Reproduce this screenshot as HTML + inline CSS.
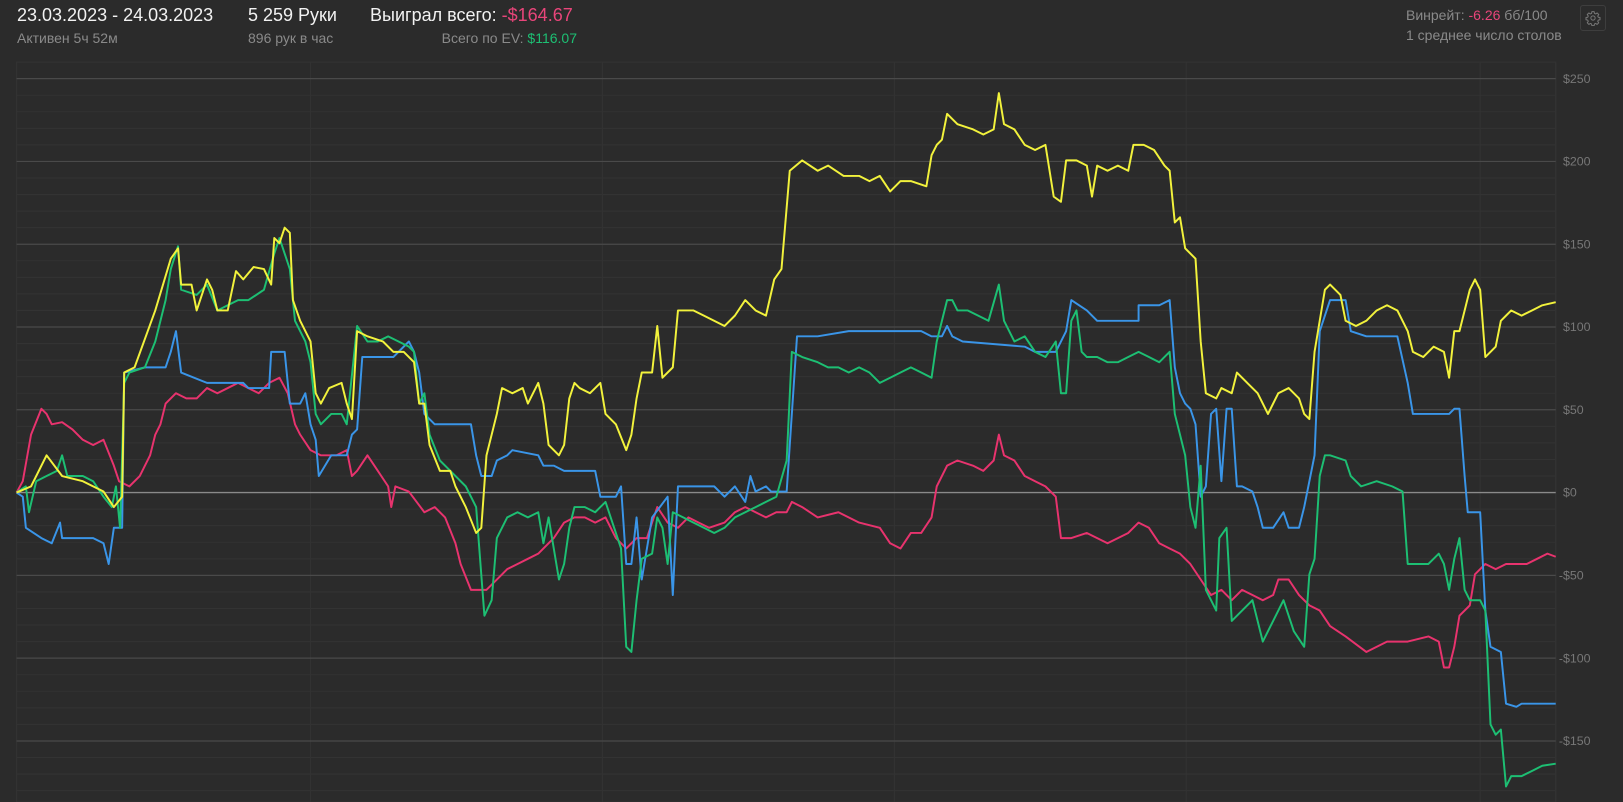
<!DOCTYPE html>
<html><head><meta charset="utf-8"><style>
html,body{margin:0;padding:0;background:#2b2b2b;width:1623px;height:802px;overflow:hidden;font-family:"Liberation Sans",sans-serif}
.t{position:absolute;white-space:nowrap}
.w{color:#f2f2f2;font-size:18px}
.g{color:#8a8a8a;font-size:14px}
.pk{color:#e8457a}.gr{color:#1dbf73}
svg{position:absolute;left:0;top:0}
</style></head><body>
<svg width="1623" height="802" viewBox="0 0 1568 775" preserveAspectRatio="none">
<rect x="16" y="60" width="1487" height="715" fill="#2b2b2b" stroke="#333" stroke-width="1"/>
<g stroke="#333" stroke-width="1">
<path d="M16 92H1503M16 108H1503M16 124H1503M16 140H1503M16 172H1503M16 188H1503M16 204H1503M16 220H1503M16 252H1503M16 268H1503M16 284H1503M16 300H1503M16 332H1503M16 348H1503M16 364H1503M16 380H1503M16 412H1503M16 428H1503M16 444H1503M16 460H1503M16 492H1503M16 508H1503M16 524H1503M16 540H1503M16 572H1503M16 588H1503M16 604H1503M16 620H1503M16 652H1503M16 668H1503M16 684H1503M16 700H1503M16 732H1503M16 748H1503M16 764H1503"/>
<path d="M300 60V775M582 60V775M864 60V775M1146 60V775M1430 60V775M1503 60V775"/>
</g>
<g stroke="#4a4a4a" stroke-width="1.2"><path d="M16 76H1503M16 156H1503M16 236H1503M16 316H1503M16 396H1503M16 556H1503M16 636H1503M16 716H1503"/></g>
<path d="M16 476H1503" stroke="#8a8a8a" stroke-width="1.3"/>
<g font-family="Liberation Sans,sans-serif" font-size="12" fill="#777">
<text x="1510" y="80">$250</text><text x="1510" y="160">$200</text><text x="1510" y="240">$150</text><text x="1510" y="320">$100</text><text x="1510" y="400">$50</text><text x="1510" y="480">$0</text><text x="1506" y="560">-$50</text><text x="1506" y="640">-$100</text><text x="1506" y="720">-$150</text>
</g>
<g fill="none" stroke-width="1.9" stroke-linejoin="round">
<polyline stroke="#e8336e" points="16,476 22,465 30,420 40,395 45,400 50,410 60,408 70,415 80,425 90,430 100,425 110,450 115,465 125,470 135,460 145,440 150,420 155,410 160,390 170,380 180,385 190,385 200,375 210,380 220,375 230,370 240,375 250,380 260,370 270,365 278,380 285,410 290,420 300,435 310,440 325,440 335,435 340,460 345,455 355,440 365,455 375,470 378,490 382,470 395,475 410,495 420,490 430,500 440,525 445,545 455,570 470,570 480,560 490,550 500,545 510,540 520,535 535,520 545,505 555,500 565,500 575,505 585,500 595,520 605,530 615,520 625,520 635,490 645,505 655,510 665,500 675,505 685,510 700,505 710,495 720,490 730,495 740,500 750,495 760,495 765,485 775,490 790,500 810,495 830,505 850,510 860,525 870,530 880,515 890,515 900,500 905,470 915,450 925,445 940,450 950,455 960,445 965,420 970,440 980,445 990,460 1000,465 1010,470 1020,480 1025,520 1035,520 1050,515 1060,520 1070,525 1080,520 1090,515 1100,505 1110,510 1120,525 1130,530 1140,535 1150,545 1160,560 1170,575 1180,570 1190,580 1200,570 1210,575 1220,580 1230,575 1235,560 1245,560 1255,575 1265,585 1275,590 1285,605 1300,615 1320,630 1340,620 1360,620 1380,615 1390,620 1395,645 1400,645 1405,625 1410,595 1420,585 1425,555 1435,545 1445,550 1455,545 1465,545 1475,545 1485,540 1495,535 1503,538"/>
<polyline stroke="#3a95e8" points="16,476 22,480 25,510 40,520 50,525 58,505 60,520 70,520 90,520 100,525 105,545 110,510 118,510 120,360 140,355 160,355 165,340 170,320 175,360 200,370 235,370 240,375 260,375 262,340 275,340 280,390 290,390 295,380 300,410 305,425 308,460 320,440 335,440 340,420 345,415 350,345 365,345 380,345 395,330 400,340 405,360 410,400 420,410 455,410 460,440 465,460 475,460 480,445 490,440 495,435 520,440 525,450 535,450 545,455 555,455 575,455 580,480 595,480 600,470 605,545 610,545 615,500 620,560 630,500 645,480 650,575 655,470 690,470 700,480 710,470 720,485 725,460 730,475 740,470 745,475 760,475 770,325 790,325 820,320 860,320 890,320 900,325 910,325 915,315 920,325 930,330 990,335 1000,340 1020,340 1030,320 1035,290 1050,300 1060,310 1100,310 1100,295 1120,295 1130,290 1135,355 1140,380 1145,390 1150,395 1155,410 1160,480 1165,470 1170,400 1175,395 1180,465 1185,395 1190,395 1195,470 1200,470 1210,475 1215,490 1220,510 1230,510 1240,495 1245,510 1255,510 1260,490 1270,440 1275,320 1285,290 1300,290 1305,320 1320,325 1350,325 1360,370 1365,400 1400,400 1405,395 1410,395 1415,460 1418,495 1430,495 1435,590 1440,625 1450,630 1455,680 1465,683 1470,680 1503,680"/>
<polyline stroke="#1dbf73" points="16,476 25,470 28,495 35,465 45,460 55,455 60,440 65,460 80,460 90,465 100,480 108,490 112,470 116,510 120,370 125,360 140,355 150,330 160,290 165,260 172,238 175,280 190,285 200,275 210,300 220,295 230,290 240,290 255,280 265,245 270,230 275,245 280,260 285,310 295,330 300,350 305,400 310,410 320,400 330,400 335,410 345,315 355,330 365,330 375,325 385,330 395,335 400,340 405,390 410,380 415,420 425,445 435,455 450,470 460,490 468,595 475,580 480,520 490,500 500,495 510,500 520,495 525,525 530,500 540,560 545,545 550,510 555,490 565,490 575,495 585,485 590,500 600,530 605,625 610,630 615,580 620,540 630,535 635,500 640,510 645,545 650,495 660,500 670,505 680,510 690,515 700,510 710,500 720,495 730,490 740,485 750,480 760,445 765,340 775,345 790,350 800,355 810,355 820,360 830,355 840,360 850,370 860,365 870,360 880,355 890,360 900,365 905,330 915,290 920,290 925,300 935,300 945,305 955,310 965,275 970,310 980,330 990,325 1000,340 1010,345 1020,330 1025,380 1030,380 1035,310 1040,300 1045,340 1050,345 1060,345 1070,350 1080,350 1090,345 1100,340 1110,345 1120,350 1130,340 1135,400 1140,420 1145,440 1150,490 1155,510 1160,450 1165,570 1170,580 1175,590 1178,520 1185,510 1190,600 1200,590 1210,580 1220,620 1230,600 1240,580 1250,610 1260,625 1265,555 1270,540 1275,460 1280,440 1285,440 1300,445 1305,460 1315,470 1330,465 1345,470 1355,475 1360,545 1370,545 1380,545 1390,535 1395,545 1400,570 1405,540 1410,520 1415,570 1420,580 1430,580 1435,590 1440,700 1445,710 1450,705 1455,760 1460,750 1470,750 1480,745 1490,740 1503,738"/>
<polyline stroke="#f2f23c" points="16,476 30,470 45,440 60,460 80,465 100,475 110,490 118,480 120,360 130,355 150,300 165,250 172,240 175,275 185,275 190,300 200,270 205,280 210,300 220,300 228,262 235,270 245,258 255,260 262,275 265,230 270,235 275,220 280,225 283,290 290,310 300,330 305,380 310,390 318,375 330,370 335,390 340,405 345,320 355,325 370,330 380,340 390,340 400,350 405,390 410,390 415,430 425,455 435,455 440,470 450,490 460,515 465,510 470,440 480,400 485,375 495,380 505,375 510,390 515,380 520,370 525,390 530,430 540,440 545,430 550,385 555,370 560,375 570,380 580,370 585,400 595,410 605,435 610,420 615,385 620,360 630,360 635,315 640,365 650,355 655,300 670,300 680,305 700,315 710,305 720,290 730,300 740,305 748,270 755,260 763,165 775,155 790,165 800,160 815,170 830,170 840,175 850,170 860,185 870,175 880,175 895,180 900,150 905,140 910,135 915,110 925,120 940,125 950,130 960,125 965,90 970,120 980,125 990,140 1000,145 1010,140 1018,190 1025,195 1030,155 1040,155 1050,160 1055,190 1060,160 1070,165 1080,160 1090,165 1095,140 1105,140 1115,145 1125,160 1130,165 1135,215 1140,210 1145,240 1155,250 1160,330 1165,380 1175,385 1180,375 1190,380 1195,360 1205,370 1215,380 1225,400 1235,380 1245,375 1255,385 1260,400 1265,405 1270,340 1280,280 1285,275 1295,285 1300,310 1310,315 1320,310 1330,300 1340,295 1350,300 1360,320 1365,340 1375,345 1385,335 1395,340 1400,365 1405,320 1410,320 1415,300 1420,280 1425,270 1430,280 1435,345 1445,335 1450,310 1455,305 1460,300 1470,305 1480,300 1490,295 1503,292"/>
</g>
</svg>
<div class="t w" style="left:17px;top:5px">23.03.2023 - 24.03.2023</div>
<div class="t g" style="left:17px;top:30px">Активен 5ч 52м</div>
<div class="t w" style="left:248px;top:5px">5 259 Руки</div>
<div class="t g" style="left:248px;top:30px">896 рук в час</div>
<div class="t w" style="left:370px;top:5px">Выиграл всего: <span class="pk">-$164.67</span></div>
<div class="t g" style="right:1046px;top:30px">Всего по EV: <span class="gr">$116.07</span></div>
<div class="t g" style="left:1406px;top:7px">Винрейт: <span class="pk">-6.26</span> бб/100</div>
<div class="t g" style="left:1406px;top:27px">1 среднее число столов</div>
<div style="position:absolute;left:1580px;top:5px;width:26px;height:26px;border:1px solid #3e3e3e;border-radius:3px;box-sizing:border-box"></div>
<svg width="16" height="16" viewBox="0 0 24 24" style="left:1585px;top:10px"><circle cx="12" cy="12" r="3.2" fill="none" stroke="#777" stroke-width="1.5"/><path d="M10.3 2.5h3.4l.5 2.6 1.8.8 2.2-1.5 2.4 2.4-1.5 2.2.8 1.8 2.6.5v3.4l-2.6.5-.8 1.8 1.5 2.2-2.4 2.4-2.2-1.5-1.8.8-.5 2.6h-3.4l-.5-2.6-1.8-.8-2.2 1.5-2.4-2.4 1.5-2.2-.8-1.8-2.6-.5v-3.4l2.6-.5.8-1.8-1.5-2.2 2.4-2.4 2.2 1.5 1.8-.8z" fill="none" stroke="#777" stroke-width="1.5" stroke-linejoin="round"/></svg>
</body></html>
